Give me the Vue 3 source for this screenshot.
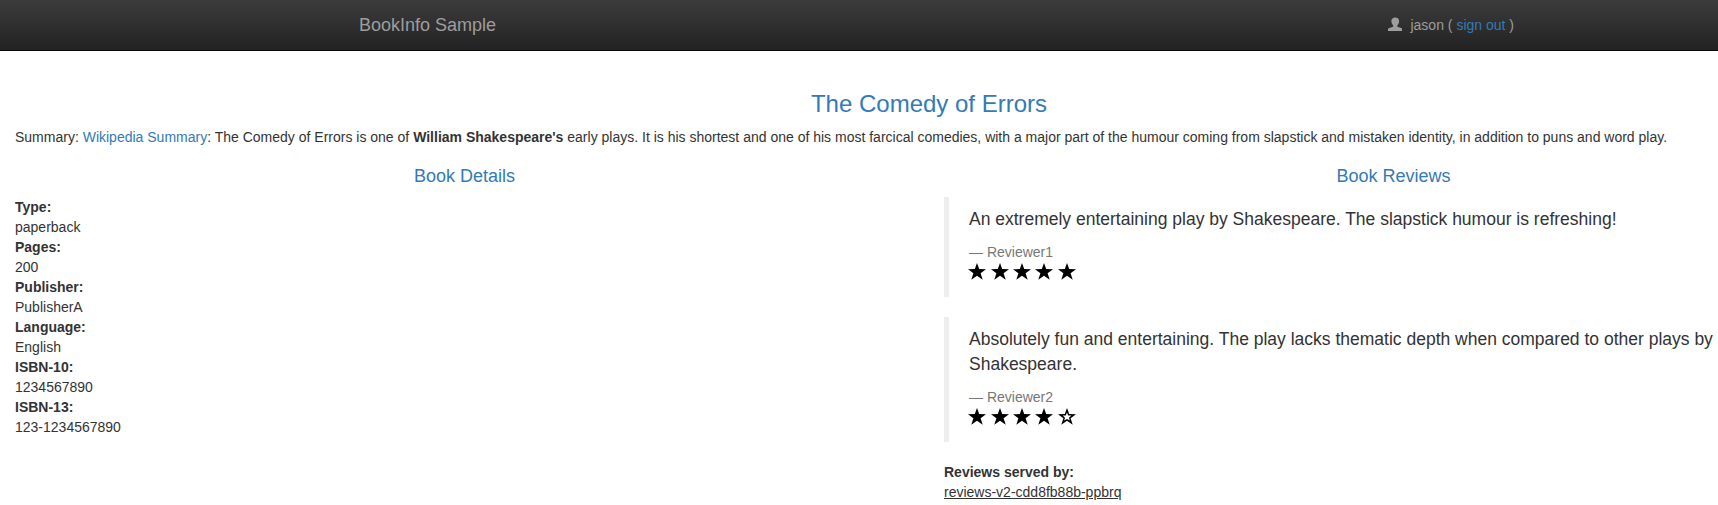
<script setup>
const details = [
  ['Type:', 'paperback'],
  ['Pages:', '200'],
  ['Publisher:', 'PublisherA'],
  ['Language:', 'English'],
  ['ISBN-10:', '1234567890'],
  ['ISBN-13:', '123-1234567890'],
]

const reviews = [
  {
    text: 'An extremely entertaining play by Shakespeare. The slapstick humour is refreshing!',
    reviewer: 'Reviewer1',
    stars: 5,
  },
  {
    text: 'Absolutely fun and entertaining. The play lacks thematic depth when compared to other plays by Shakespeare.',
    reviewer: 'Reviewer2',
    stars: 4,
  },
]
</script>

<template>
  <div class="viewport">
    <div class="page">
      <nav class="navbar">
        <div class="container">
          <a class="brand">BookInfo Sample</a>
          <p class="user">
            <svg class="user-icon" viewBox="0 0 15 14" aria-hidden="true">
              <path d="M7.5 0C9.9 0 11.5 1.4 11.5 3.8C11.5 5.7 10.8 7.3 9.6 8.3V9C9.6 9.5 9.8 9.8 10.3 10L13.7 11C14.6 11.3 15 11.8 15 12.6V14H0V12.6C0 11.8.4 11.3 1.3 11L4.7 10C5.2 9.8 5.4 9.5 5.4 9V8.3C4.2 7.3 3.5 5.7 3.5 3.8C3.5 1.4 5.1 0 7.5 0Z" />
            </svg>
            <span>jason ( <a class="link">sign out</a> )</span>
          </p>
        </div>
      </nav>

      <main>
        <h3 class="link">The Comedy of Errors</h3>
        <p class="summary">
          Summary: <a class="link">Wikipedia Summary</a>: The Comedy of Errors is one of <b>William Shakespeare's</b> early plays. It is his shortest and one of his most farcical comedies, with a major part of the humour coming from slapstick and mistaken identity, in addition to puns and word play.
        </p>

        <div class="columns">
          <section class="column">
            <h4 class="link">Book Details</h4>
            <dl>
              <template v-for="[label, value] in details" :key="label">
                <dt>{{ label }}</dt>
                <dd>{{ value }}</dd>
              </template>
            </dl>
          </section>

          <section class="column">
            <h4 class="link">Book Reviews</h4>
            <blockquote v-for="review in reviews" :key="review.reviewer">
              <p>{{ review.text }}</p>
              <small>— {{ review.reviewer }}</small>
              <div class="stars">
                <svg v-for="n in 5" :key="n" class="star" viewBox="0 0 18 17" aria-hidden="true">
                  <path
                    fill-rule="evenodd"
                    :d="n <= review.stars
                      ? 'M9 0L11.2 6.1L18 6.2L12.6 10.2L14.7 16.8L9 12.7L3.3 16.8L5.4 10.2L0 6.2L6.8 6.1Z'
                      : 'M9 0L11.2 6.1L18 6.2L12.6 10.2L14.7 16.8L9 12.7L3.3 16.8L5.4 10.2L0 6.2L6.8 6.1ZM9 4.5L7.8 7.5L4.7 7.6L7 9.7L6.2 12.6L9 10.9L11.8 12.6L11 9.7L13.3 7.6L10.2 7.5Z'"
                  />
                </svg>
              </div>
            </blockquote>
            <dl>
              <dt>Reviews served by:</dt>
              <dd><u>reviews-v2-cdd8fb88b-ppbrq</u></dd>
            </dl>
          </section>
        </div>
      </main>
    </div>
  </div>
</template>

<style>
html,
body {
  margin: 0;
  overflow: hidden;
  background: #fff;
}
</style>

<style scoped>
.viewport {
  height: 505px;
  overflow: hidden;
  font: 14px/20px "Liberation Sans", Arial, sans-serif;
  color: #333;
}
.viewport * {
  box-sizing: border-box;
}
.page {
  width: 1858px;
}
.navbar {
  height: 51px;
  margin-bottom: 20px;
  background: linear-gradient(#3c3c3c, #222);
  border-bottom: 1px solid #080808;
  color: #9d9d9d;
}
.container {
  display: flex;
  justify-content: space-between;
  width: 1170px;
  margin: 0 auto;
  padding-left: 15px;
}
.brand {
  padding: 15px 0;
  font-size: 18px;
  line-height: 20px;
}
.user {
  display: flex;
  gap: 8px;
  margin: 15px 0;
}
.user-icon {
  width: 14.5px;
  height: 14.3px;
  margin-top: 1.7px;
  fill: currentColor;
}
.link {
  color: #337ab7;
}
main {
  padding: 20px 15px 0;
}
h3,
h4 {
  font-weight: 500;
  line-height: 1.1;
  text-align: center;
}
h3 {
  margin: 0 0 10px;
  font-size: 24px;
}
h4 {
  margin: 10px 0;
  font-size: 18px;
}
.summary {
  margin: 0 0 10px;
}
.columns {
  display: grid;
  grid-template-columns: 1fr 1fr;
  gap: 30px;
}
dl {
  margin: 0 0 20px;
}
dt {
  font-weight: 700;
}
dd {
  margin: 0;
}
blockquote {
  margin: 0 0 20px;
  padding: 10px 20px;
  border-left: 5px solid #eee;
  font-size: 17.5px;
  line-height: 25px;
}
blockquote p {
  margin: 0 0 10px;
}
small {
  display: block;
  font-size: 14px;
  line-height: 20px;
  color: #777;
}
.stars {
  display: flex;
  gap: 4.4px;
  height: 25px;
  margin-left: -0.8px;
  padding-top: 0.8px;
}
.star {
  width: 18px;
  height: 17px;
  fill: #000;
}
</style>
